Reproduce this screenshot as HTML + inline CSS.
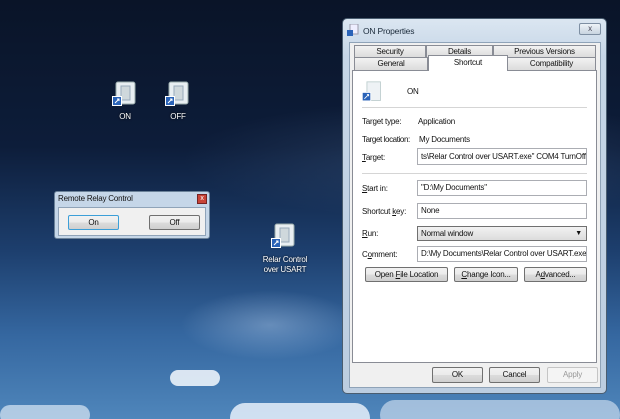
<!DOCTYPE html>
<html><head><meta charset="utf-8"><style>
*{margin:0;padding:0;box-sizing:border-box}
html{width:620px;height:419px;overflow:hidden}
body{width:620px;height:419px;overflow:hidden;position:relative;font-family:"Liberation Sans",sans-serif;font-size:8px;letter-spacing:-0.2px;color:#111;
background:linear-gradient(180deg,#0a1428 0%,#0d1d3a 35%,#1d3f6e 60%,#3567a0 80%,#4f86bb 100%);}
.a{position:absolute}
.t{position:absolute;white-space:nowrap}
.btn{position:absolute;border:1px solid #707070;border-radius:2px;background:linear-gradient(#f2f2f2,#ebebeb 50%,#dcdcdc 51%,#cfcfcf);text-align:center;font-size:8px;line-height:13px}
.fld{position:absolute;border:1px solid #abadb3;background:#fff;padding-left:3px;font-size:8px;line-height:14px;white-space:nowrap;overflow:hidden}
.tab{position:absolute;border:1px solid #898c95;background:linear-gradient(#f2f2f2,#dcdcdc);text-align:center;font-size:8px;line-height:11px}
.ic{position:absolute;width:24px;height:26px}
.lbl{position:absolute;color:#fff;text-align:center;font-size:8px;text-shadow:0 0 2px #000;line-height:10px}
</style></head><body>
<div class="a" style="left:180px;top:100px;width:440px;height:120px;background:radial-gradient(ellipse at 60% 50%,rgba(120,160,210,.2),transparent 70%)"></div>
<div class="a" style="left:180px;top:290px;width:180px;height:70px;background:radial-gradient(ellipse at 50% 50%,rgba(200,220,245,.35),transparent 70%)"></div>
<div class="a" style="left:170px;top:370px;width:50px;height:16px;border-radius:9px;background:rgba(235,242,250,.9)"></div>
<div class="a" style="left:230px;top:403px;width:140px;height:30px;border-radius:15px;background:rgba(230,240,250,.85)"></div>
<div class="a" style="left:380px;top:400px;width:240px;height:30px;border-radius:15px;background:rgba(220,232,245,.6)"></div>
<div class="a" style="left:0;top:405px;width:90px;height:20px;border-radius:10px;background:rgba(220,232,245,.7)"></div>

<svg class="ic" style="left:112px;top:81px" viewBox="0 0 24 26"><rect x="4" y="1" width="19" height="22" rx="2" fill="#e8eef2" stroke="#9aa"/><rect x="9" y="5" width="9" height="14" fill="#cfd8dc" stroke="#9ab"/><rect x="0" y="15" width="10" height="10" fill="#fff"/><rect x="1" y="16" width="8" height="8" fill="#2a63b8"/><path d="M3 22 L7 18 M5 18h2v2" stroke="#fff" fill="none"/></svg>
<div class="lbl" style="left:105px;top:112px;width:40px">ON</div>
<svg class="ic" style="left:165px;top:81px" viewBox="0 0 24 26"><rect x="4" y="1" width="19" height="22" rx="2" fill="#e8eef2" stroke="#9aa"/><rect x="9" y="5" width="9" height="14" fill="#cfd8dc" stroke="#9ab"/><rect x="0" y="15" width="10" height="10" fill="#fff"/><rect x="1" y="16" width="8" height="8" fill="#2a63b8"/><path d="M3 22 L7 18 M5 18h2v2" stroke="#fff" fill="none"/></svg>
<div class="lbl" style="left:158px;top:112px;width:40px">OFF</div>
<svg class="ic" style="left:271px;top:223px" viewBox="0 0 24 26"><rect x="4" y="1" width="19" height="22" rx="2" fill="#e8eef2" stroke="#9aa"/><rect x="9" y="5" width="9" height="14" fill="#cfd8dc" stroke="#9ab"/><rect x="0" y="15" width="10" height="10" fill="#fff"/><rect x="1" y="16" width="8" height="8" fill="#2a63b8"/><path d="M3 22 L7 18 M5 18h2v2" stroke="#fff" fill="none"/></svg>
<div class="lbl" style="left:250px;top:255px;width:70px">Relar Control<br>over USART</div>

<div class="a" style="left:54px;top:191px;width:156px;height:48px;border:1px solid #6b8299;background:#c5d6e8;border-radius:3px"></div>
<div class="t" style="left:58px;top:194px">Remote Relay Control</div>
<div class="a" style="left:197px;top:194px;width:10px;height:10px;background:#c84437;border:1px solid #722;color:#fff;font-size:7px;line-height:8px;text-align:center">x</div>
<div class="a" style="left:58px;top:207px;width:148px;height:29px;background:#f0f0f0;border:1px solid #8fa3b8"></div>
<div class="btn" style="left:68px;top:215px;width:51px;height:15px;border-color:#3c9fd8">On</div>
<div class="btn" style="left:149px;top:215px;width:51px;height:15px">Off</div>

<div class="a" style="left:342px;top:18px;width:265px;height:376px;border:1px solid #4a5d70;border-radius:5px;background:linear-gradient(180deg,#dbe6f1,#c6d6e7 10%,#bccde0)"></div>
<svg class="a" style="left:347px;top:24px" width="12" height="12"><rect x="3" y="0" width="8" height="10" fill="#eef" stroke="#99a"/><rect x="0" y="6" width="6" height="6" fill="#2a63b8"/></svg>
<div class="t" style="left:363px;top:26px;font-size:8.5px;color:#1a2a3a">ON Properties</div>
<div class="a" style="left:579px;top:23px;width:22px;height:12px;border:1px solid #7e8fa3;border-radius:2px;background:linear-gradient(#eef3f8,#c8d4e0);font-size:8px;line-height:10px;text-align:center;color:#445">x</div>
<div class="a" style="left:349px;top:42px;width:252px;height:346px;background:#f0f0f0;border:1px solid #8fa3b8"></div>
<div class="tab" style="left:354px;top:45px;width:72px;height:13px">Security</div>
<div class="tab" style="left:426px;top:45px;width:67px;height:13px">Details</div>
<div class="tab" style="left:493px;top:45px;width:103px;height:13px">Previous Versions</div>
<div class="tab" style="left:354px;top:57px;width:74px;height:14px">General</div>
<div class="tab" style="left:507px;top:57px;width:89px;height:14px">Compatibility</div>
<div class="a" style="left:352px;top:70px;width:245px;height:293px;background:#fff;border:1px solid #898c95"></div>
<div class="tab" style="left:428px;top:55px;width:80px;height:16px;background:#fff;border-bottom:none;line-height:13px">Shortcut</div>

<svg class="a" style="left:361px;top:81px" width="22" height="22" viewBox="0 0 24 26"><rect x="6" y="1" width="16" height="22" fill="#eef2f5" stroke="#bcc"/><rect x="0" y="13" width="11" height="11" fill="#fff"/><rect x="1" y="14" width="9" height="9" fill="#2a63b8"/><path d="M3 21 L8 16 M6 16h2v2" stroke="#fff" fill="none"/></svg>
<div class="t" style="left:407px;top:87px">ON</div>
<div class="a" style="left:362px;top:107px;width:225px;height:1px;background:#d5d5d5"></div>
<div class="t" style="left:362px;top:117px">Target type:</div>
<div class="t" style="left:418px;top:117px">Application</div>
<div class="t" style="left:362px;top:135px;letter-spacing:-0.4px">Target location:</div>
<div class="t" style="left:419px;top:135px">My Documents</div>
<div class="t" style="left:362px;top:153px"><u>T</u>arget:</div>
<div class="fld" style="left:417px;top:148px;width:170px;height:17px;line-height:15px">ts\Relar Control over USART.exe" COM4 TurnOff</div>
<div class="a" style="left:362px;top:173px;width:225px;height:1px;background:#d5d5d5"></div>
<div class="t" style="left:362px;top:184px"><u>S</u>tart in:</div>
<div class="fld" style="left:417px;top:180px;width:170px;height:16px">"D:\My Documents"</div>
<div class="t" style="left:362px;top:207px">Shortcut <u>k</u>ey:</div>
<div class="fld" style="left:417px;top:203px;width:170px;height:16px">None</div>
<div class="t" style="left:362px;top:229px"><u>R</u>un:</div>
<div class="fld" style="left:417px;top:226px;width:170px;height:15px;background:linear-gradient(#f2f2f2,#dcdcdc);border-color:#707070;line-height:13px">Normal window<span style="position:absolute;right:4px;font-size:7px">▼</span></div>
<div class="t" style="left:362px;top:250px">C<u>o</u>mment:</div>
<div class="fld" style="left:417px;top:246px;width:170px;height:16px">D:\My Documents\Relar Control over USART.exe</div>
<div class="btn" style="left:365px;top:267px;width:83px;height:15px">Open <u>F</u>ile Location</div>
<div class="btn" style="left:454px;top:267px;width:64px;height:15px"><u>C</u>hange Icon...</div>
<div class="btn" style="left:524px;top:267px;width:63px;height:15px">A<u>d</u>vanced...</div>

<div class="btn" style="left:432px;top:367px;width:51px;height:16px">OK</div>
<div class="btn" style="left:489px;top:367px;width:51px;height:16px">Cancel</div>
<div class="btn" style="left:547px;top:367px;width:51px;height:16px;color:#999;border-color:#c5c5c5;background:#f4f4f4">Apply</div>
</body></html>
